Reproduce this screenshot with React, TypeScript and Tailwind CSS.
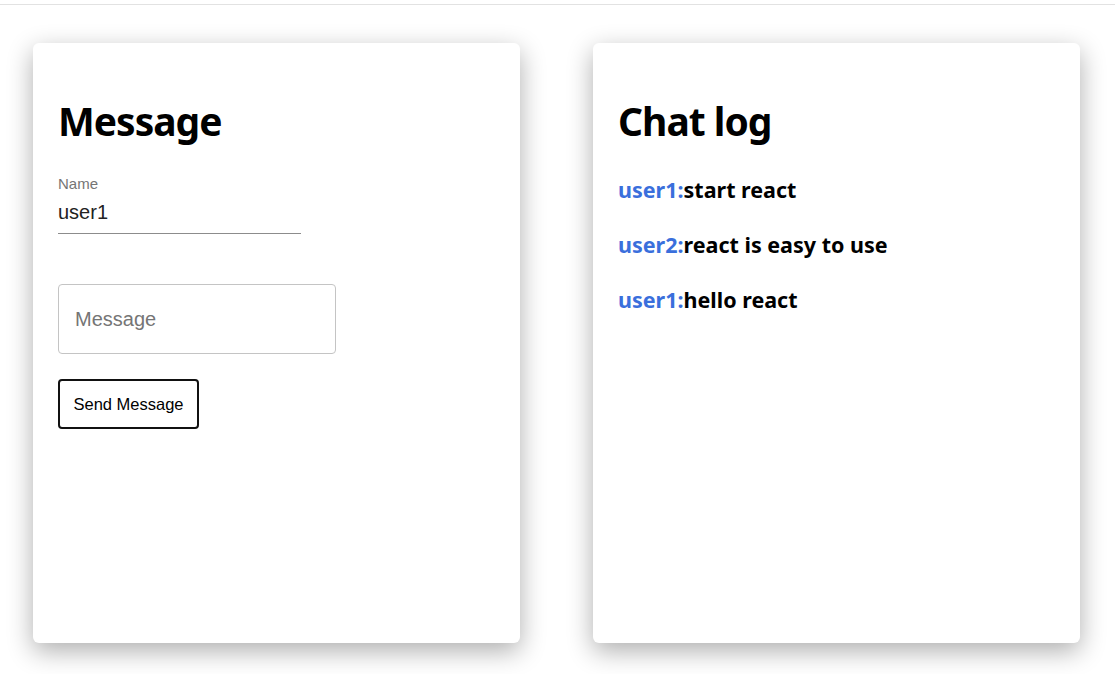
import { useState } from 'react'

const messages = [
  { user: 'user1', text: 'start react' },
  { user: 'user2', text: 'react is easy to use' },
  { user: 'user1', text: 'hello react' },
]

export default function App() {
  const [name, setName] = useState('user1')
  const [message, setMessage] = useState('')

  return (
    <div className="min-h-screen bg-white font-['Liberation_Sans',Arial,sans-serif]">
      <div className="h-[5px] border-b border-[#e2e2e2]" />
      <div className="flex gap-[73px] pl-[33px] pr-[35px] pt-[38px]">
        <section className="flex h-[600px] w-[487px] flex-col items-start rounded-md bg-white px-[25px] pt-[54px] shadow-[0_8px_26px_rgba(0,0,0,0.32)]">
          <h1 className="font-['Noto_Sans',sans-serif] text-[39px] font-bold leading-[48px] tracking-[-1px] text-black">Message</h1>

          <div className="mt-[31px] w-[243px]">
            <label className="block text-[15px] leading-[16px] text-[#757575]">Name</label>
            <input
              value={name}
              onChange={(e) => setName(e.target.value)}
              className="mt-[8px] block h-[34px] w-full border-b border-[#8c8c8c] pb-[8px] text-[20px] text-[#222] outline-none"
            />
          </div>

          <input
            value={message}
            onChange={(e) => setMessage(e.target.value)}
            placeholder="Message"
            className="mt-[50px] h-[70px] w-[278px] rounded-[4px] border border-[#c4c4c4] px-[16px] text-[20px] text-[#222] outline-none placeholder:text-[#757575]"
          />

          <button className="mt-[25px] h-[50px] w-[141px] rounded-[4px] border-2 border-[#111] bg-white text-[16.5px] text-black">
            Send Message
          </button>
        </section>

        <section className="flex h-[600px] w-[487px] flex-col rounded-md bg-white px-[25px] pt-[54px] shadow-[0_8px_26px_rgba(0,0,0,0.32)]">
          <h1 className="font-['Noto_Sans',sans-serif] text-[39px] font-bold leading-[48px] tracking-[-1px] text-black">Chat log</h1>
          <div className="mt-[30px] flex flex-col gap-[25px] font-['Noto_Sans',sans-serif] text-[21.5px] font-bold leading-[30px]">
            {messages.map((m, i) => (
              <p key={i}>
                <span className="text-[#3a6fdc]">{m.user}:</span>
                <span className="text-black">{m.text}</span>
              </p>
            ))}
          </div>
        </section>
      </div>
    </div>
  )
}
